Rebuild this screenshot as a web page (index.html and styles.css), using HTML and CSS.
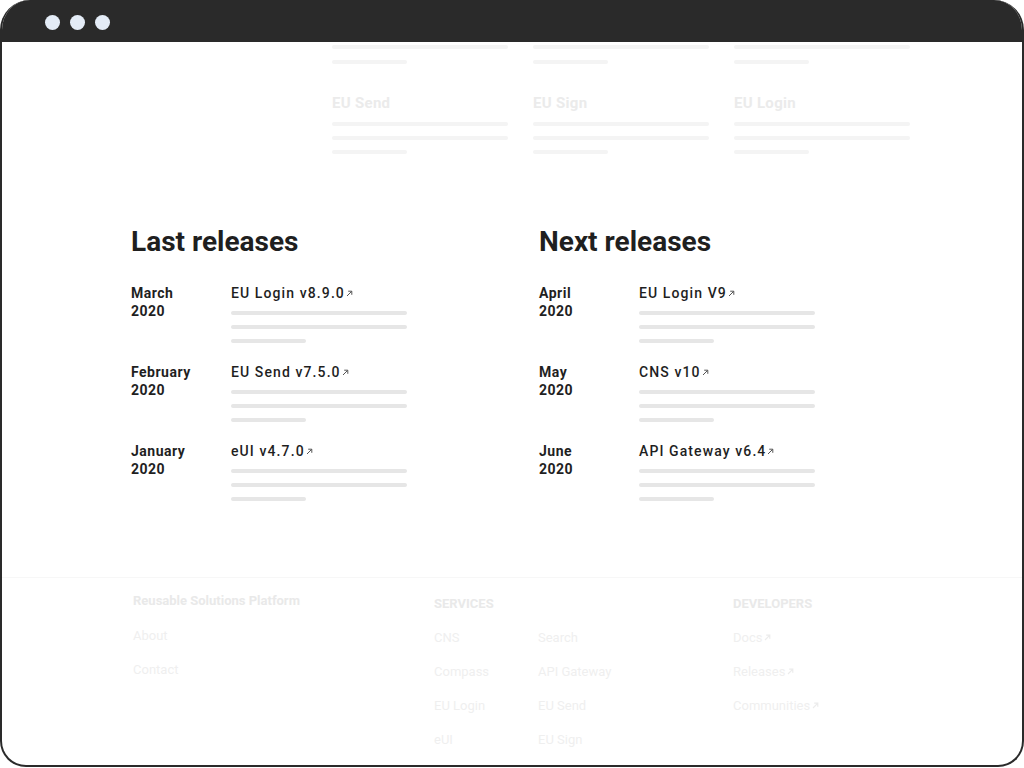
FILE: index.html
```html
<!DOCTYPE html>
<html lang="en">
<head>
<meta charset="utf-8">
<title>Releases</title>
<link rel="stylesheet" href="styles.css">
</head>
<body>
<div class="window">
  <div class="titlebar">
    <span class="dot"></span><span class="dot"></span><span class="dot"></span>
  </div>
  <div class="viewport">
    <section class="cards">
      <div class="card card--partial">
        <span class="bar bar--faint"></span>
        <span class="bar bar--faint bar--short"></span>
      </div>
      <div class="card card--partial">
        <span class="bar bar--faint"></span>
        <span class="bar bar--faint bar--short"></span>
      </div>
      <div class="card card--partial">
        <span class="bar bar--faint"></span>
        <span class="bar bar--faint bar--short"></span>
      </div>
      <div class="card">
        <h3 class="card-title">EU Send</h3>
        <span class="bar bar--faint"></span>
        <span class="bar bar--faint"></span>
        <span class="bar bar--faint bar--short"></span>
      </div>
      <div class="card">
        <h3 class="card-title">EU Sign</h3>
        <span class="bar bar--faint"></span>
        <span class="bar bar--faint"></span>
        <span class="bar bar--faint bar--short"></span>
      </div>
      <div class="card">
        <h3 class="card-title">EU Login</h3>
        <span class="bar bar--faint"></span>
        <span class="bar bar--faint"></span>
        <span class="bar bar--faint bar--short"></span>
      </div>
    </section>

    <section class="releases">
      <div class="release-col">
        <h2 class="release-heading">Last releases</h2>
        <div class="release-list">
          <div class="release">
            <div class="release-date">March<br>2020</div>
            <div class="release-body">
              <a class="release-title" href="#">EU Login v8.9.0<svg class="ext" viewBox="0 0 7 7" width="7" height="7"><path d="M1 6L5.6 1.4M2.2 1.2H5.8V4.8" fill="none" stroke="#555" stroke-width="1"/></svg></a>
              <span class="bar"></span><span class="bar"></span><span class="bar bar--short"></span>
            </div>
          </div>
          <div class="release">
            <div class="release-date">February<br>2020</div>
            <div class="release-body">
              <a class="release-title" href="#">EU Send v7.5.0<svg class="ext" viewBox="0 0 7 7" width="7" height="7"><path d="M1 6L5.6 1.4M2.2 1.2H5.8V4.8" fill="none" stroke="#555" stroke-width="1"/></svg></a>
              <span class="bar"></span><span class="bar"></span><span class="bar bar--short"></span>
            </div>
          </div>
          <div class="release">
            <div class="release-date">January<br>2020</div>
            <div class="release-body">
              <a class="release-title" href="#">eUI v4.7.0<svg class="ext" viewBox="0 0 7 7" width="7" height="7"><path d="M1 6L5.6 1.4M2.2 1.2H5.8V4.8" fill="none" stroke="#555" stroke-width="1"/></svg></a>
              <span class="bar"></span><span class="bar"></span><span class="bar bar--short"></span>
            </div>
          </div>
        </div>
      </div>
      <div class="release-col">
        <h2 class="release-heading">Next releases</h2>
        <div class="release-list">
          <div class="release">
            <div class="release-date">April<br>2020</div>
            <div class="release-body">
              <a class="release-title" href="#">EU Login V9<svg class="ext" viewBox="0 0 7 7" width="7" height="7"><path d="M1 6L5.6 1.4M2.2 1.2H5.8V4.8" fill="none" stroke="#555" stroke-width="1"/></svg></a>
              <span class="bar"></span><span class="bar"></span><span class="bar bar--short"></span>
            </div>
          </div>
          <div class="release">
            <div class="release-date">May<br>2020</div>
            <div class="release-body">
              <a class="release-title" href="#">CNS v10<svg class="ext" viewBox="0 0 7 7" width="7" height="7"><path d="M1 6L5.6 1.4M2.2 1.2H5.8V4.8" fill="none" stroke="#555" stroke-width="1"/></svg></a>
              <span class="bar"></span><span class="bar"></span><span class="bar bar--short"></span>
            </div>
          </div>
          <div class="release">
            <div class="release-date">June<br>2020</div>
            <div class="release-body">
              <a class="release-title" href="#">API Gateway v6.4<svg class="ext" viewBox="0 0 7 7" width="7" height="7"><path d="M1 6L5.6 1.4M2.2 1.2H5.8V4.8" fill="none" stroke="#555" stroke-width="1"/></svg></a>
              <span class="bar"></span><span class="bar"></span><span class="bar bar--short"></span>
            </div>
          </div>
        </div>
      </div>
    </section>

    <footer class="footer">
      <div class="footer-col footer-col--brand">
        <div class="footer-brand">Reusable Solutions Platform</div>
        <div class="footer-links">
          <a href="#">About</a>
          <a href="#">Contact</a>
        </div>
      </div>
      <div class="footer-col footer-col--section">
        <div class="footer-title">SERVICES</div>
        <div class="footer-links footer-links--grid">
          <a href="#">CNS</a><a href="#">Search</a>
          <a href="#">Compass</a><a href="#">API Gateway</a>
          <a href="#">EU Login</a><a href="#">EU Send</a>
          <a href="#">eUI</a><a href="#">EU Sign</a>
        </div>
      </div>
      <div class="footer-col footer-col--section">
        <div class="footer-title">DEVELOPERS</div>
        <div class="footer-links">
          <a href="#">Docs<svg class="ext" viewBox="0 0 7 7" width="7" height="7"><path d="M1 6L5.6 1.4M2.2 1.2H5.8V4.8" fill="none" stroke="#ececec" stroke-width="1.2"/></svg></a>
          <a href="#">Releases<svg class="ext" viewBox="0 0 7 7" width="7" height="7"><path d="M1 6L5.6 1.4M2.2 1.2H5.8V4.8" fill="none" stroke="#ececec" stroke-width="1.2"/></svg></a>
          <a href="#">Communities<svg class="ext" viewBox="0 0 7 7" width="7" height="7"><path d="M1 6L5.6 1.4M2.2 1.2H5.8V4.8" fill="none" stroke="#ececec" stroke-width="1.2"/></svg></a>
        </div>
      </div>
    </footer>
  </div>
</div>
</body>
</html>
```

FILE: styles.css
```css
* { box-sizing: border-box; }

html, body {
  margin: 0;
  padding: 0;
  background: #ffffff;
}

body {
  font-family: Roboto, "Liberation Sans", Arial, sans-serif;
  color: #1f1f1f;
}

a { color: inherit; text-decoration: none; }

.window {
  width: 1024px;
  height: 767px;
  border: 2px solid #2a2a2a;
  border-top: none;
  border-radius: 30px 30px 26px 26px;
  overflow: hidden;
  display: flex;
  flex-direction: column;
  background: #ffffff;
}

.titlebar {
  height: 42px;
  flex: none;
  background: #2a2a2a;
  display: flex;
  align-items: center;
  gap: 10px;
  padding: 2px 0 0 43px;
}

.dot {
  width: 15px;
  height: 15px;
  border-radius: 50%;
  background: #e4ecf7;
}

.viewport {
  flex: 1;
  overflow: hidden;
}

/* faded cards (scrolled content) */
.cards {
  display: grid;
  grid-template-columns: repeat(3, 176px);
  column-gap: 25px;
  row-gap: 29px;
  padding: 3px 0 0 330px;
}

.card {
  display: flex;
  flex-direction: column;
  gap: 10px;
}

.card--partial { gap: 11px; }

.card-title {
  margin: 0 0 -1px;
  font-size: 15px;
  line-height: 20px;
  font-weight: 700;
  letter-spacing: 0.3px;
  color: #ebebeb;
}

.bar {
  display: block;
  width: 176px;
  height: 4px;
  border-radius: 2px;
  background: #e6e6e6;
}

.bar--short { width: 75px; }
.bar--faint { background: #f4f4f4; }

/* releases */
.releases {
  display: grid;
  grid-template-columns: 408px 1fr;
  padding: 70px 0 0 129px;
}

.release-heading {
  margin: 0 0 24px;
  font-size: 28px;
  line-height: 36px;
  font-weight: 700;
  color: #1f1f1f;
}

.release-list {
  display: flex;
  flex-direction: column;
  gap: 20px;
}

.release {
  display: grid;
  grid-template-columns: 100px 176px;
}

.release-date {
  font-size: 14px;
  line-height: 18px;
  font-weight: 700;
  letter-spacing: 0.5px;
  color: #1f1f1f;
}

.release-body {
  display: flex;
  flex-direction: column;
  gap: 10px;
}

.release-title {
  font-size: 14px;
  line-height: 18px;
  font-weight: 500;
  letter-spacing: 1.1px;
  margin-bottom: -1px;
  white-space: nowrap;
}

.release-title .ext {
  margin-left: 1px;
  vertical-align: 1px;
}

/* footer */
.footer {
  margin-top: 76px;
  border-top: 1px solid #f7f7f7;
  display: grid;
  grid-template-columns: 301px 299px 1fr;
  padding: 14px 0 0 131px;
  font-size: 13px;
  line-height: 18px;
  color: #efefef;
}

.footer-col--section { padding-top: 3px; }

.footer-brand {
  font-weight: 700;
  color: #e9e9e9;
  margin-bottom: 17px;
}

.footer-title {
  font-weight: 700;
  color: #e9e9e9;
  margin-bottom: 16px;
}

.footer-links {
  display: flex;
  flex-direction: column;
  gap: 16px;
  align-items: flex-start;
}

.footer-links--grid {
  display: grid;
  grid-template-columns: 104px 1fr;
  column-gap: 0;
  row-gap: 16px;
}

.footer-links .ext {
  margin-left: 2px;
  vertical-align: 1px;
}
```
